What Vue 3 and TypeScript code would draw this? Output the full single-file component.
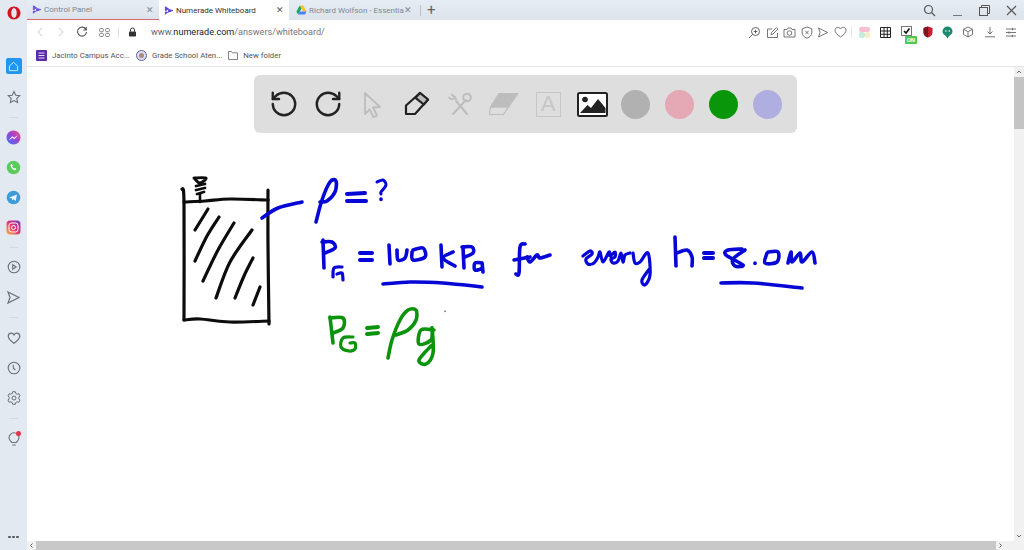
<script setup lang="ts">
type Stroke = { color: string; width?: number; pts: number[][] }

const BLUE = '#0606d6'
const GREEN = '#0b930b'
const INK = '#0c0c0c'

const strokes: Stroke[] = [
  // cylinder
  { color: INK, pts: [[182, 189], [184, 203], [184, 320]] },
  { color: INK, pts: [[184, 320], [200, 319], [230, 322], [269, 321]] },
  { color: INK, pts: [[268, 190], [268, 245], [269, 324]] },
  { color: INK, pts: [[184, 202], [205, 201], [230, 199], [268, 200]] },
  { color: INK, pts: [[195, 230], [208, 209]] },
  { color: INK, pts: [[195, 261], [207, 236], [219, 217]] },
  { color: INK, pts: [[203, 281], [218, 250], [234, 223]] },
  { color: INK, pts: [[216, 298], [230, 262], [252, 230]] },
  { color: INK, pts: [[235, 298], [244, 276], [253, 258]] },
  { color: INK, pts: [[253, 305], [260, 287]] },
  // valve
  { color: INK, width: 3, pts: [[194, 178], [206, 178], [200, 183], [195, 179]] },
  { color: INK, width: 2.8, pts: [[196, 186], [205, 184]] },
  { color: INK, width: 2.8, pts: [[196, 190], [205, 188]] },
  { color: INK, width: 2.8, pts: [[197, 194], [204, 192]] },
  { color: INK, width: 2.6, pts: [[200, 194], [200, 202]] },
  // first line
  { color: BLUE, pts: [[262, 218], [278, 208], [302, 202]] },
  { color: BLUE, pts: [[316, 222], [322, 200], [330, 182], [336, 181], [335, 192], [327, 201], [320, 202]] },
  { color: BLUE, width: 4, pts: [[347, 194], [365, 193]] },
  { color: BLUE, width: 4, pts: [[347, 201], [366, 201]] },
  { color: BLUE, width: 3, pts: [[377, 182], [383, 180], [386, 185], [381, 192], [381, 194]] },
  { color: BLUE, pts: [[381, 199], [381, 199.5]] },
  // second line
  { color: BLUE, pts: [[323, 240], [324, 268]] },
  { color: BLUE, pts: [[322, 242], [332, 242], [335, 248], [325, 253]] },
  { color: BLUE, width: 3.2, pts: [[342, 267], [334, 268], [333, 277]] },
  { color: BLUE, width: 3.2, pts: [[337, 274], [342, 273], [343, 280]] },
  { color: BLUE, width: 4, pts: [[360, 253], [372, 253]] },
  { color: BLUE, width: 4, pts: [[360, 260], [372, 260]] },
  { color: BLUE, pts: [[389, 245], [390, 264]] },
  { color: BLUE, pts: [[397, 250], [398, 260], [405, 258], [407, 250]] },
  { color: BLUE, pts: [[412, 252], [413, 260], [425, 257], [423, 248], [413, 250]] },
  { color: BLUE, pts: [[441, 245], [442, 267]] },
  { color: BLUE, pts: [[453, 252], [443, 258], [455, 266]] },
  { color: BLUE, pts: [[463, 247], [464, 268]] },
  { color: BLUE, pts: [[462, 247], [472, 247], [473, 253], [465, 257]] },
  { color: BLUE, pts: [[482, 263], [475, 263], [475, 270], [482, 268], [482, 263], [483, 272]] },
  { color: BLUE, pts: [[383, 284], [410, 282], [443, 283], [482, 287]] },
  { color: BLUE, pts: [[525, 244], [520, 247], [519, 273], [516, 274]] },
  { color: BLUE, pts: [[514, 260], [530, 257]] },
  { color: BLUE, pts: [[527, 257], [530, 262], [537, 255], [540, 258], [550, 255]] },
  { color: BLUE, width: 3.2, pts: [[583, 256], [590, 251], [592, 254], [586, 259], [588, 264], [594, 263], [598, 257], [600, 252], [603, 262], [609, 252], [610, 256], [615, 252], [615, 257], [611, 259], [613, 263], [618, 261], [621, 253], [623, 262], [625, 255], [630, 253]] },
  { color: BLUE, width: 3.2, pts: [[633, 253], [635, 263], [640, 262], [648, 253], [650, 275], [645, 285], [642, 280], [650, 268]] },
  { color: BLUE, pts: [[675, 237], [676, 266]] },
  { color: BLUE, pts: [[677, 253], [687, 250], [692, 257], [692, 266]] },
  { color: BLUE, width: 4, pts: [[704, 253], [713, 253]] },
  { color: BLUE, width: 4, pts: [[704, 258], [713, 258]] },
  { color: BLUE, pts: [[742, 249], [728, 250], [726, 255], [743, 265], [735, 266], [733, 259], [745, 250]] },
  { color: BLUE, pts: [[755, 263], [755, 263.5]] },
  { color: BLUE, pts: [[767, 253], [765, 263], [777, 262], [778, 252], [768, 252]] },
  { color: BLUE, pts: [[788, 263], [791, 252], [792, 262], [800, 253], [802, 262], [812, 252], [815, 263]] },
  { color: BLUE, pts: [[721, 283], [753, 283], [802, 288]] },
  // third line
  { color: GREEN, pts: [[330, 317], [333, 343]] },
  { color: GREEN, pts: [[330, 318], [343, 318], [343, 328], [333, 333]] },
  { color: GREEN, width: 3.2, pts: [[353, 337], [343, 338], [341, 347], [349, 351], [355, 349], [355, 343], [350, 343]] },
  { color: GREEN, width: 4, pts: [[367, 328], [378, 327]] },
  { color: GREEN, width: 4, pts: [[367, 334], [378, 333]] },
  { color: GREEN, pts: [[388, 358], [392, 340], [400, 320], [408, 310], [416, 310], [416, 320], [408, 330], [396, 335]] },
  { color: GREEN, pts: [[434, 330], [421, 330], [419, 344], [431, 340], [432, 328], [433, 353], [426, 364], [419, 360], [431, 346]] },
  { color: '#777', width: 1.6, pts: [[445, 311], [445, 311.5]] },
]

// catmull-rom through the sampled points, so the ink doesn't look like a polyline
const toPath = (pts: number[][]) => {
  let d = `M${pts[0][0]} ${pts[0][1]}`
  for (let i = 0; i < pts.length - 1; i++) {
    const p0 = pts[i - 1] ?? pts[i]
    const p1 = pts[i]
    const p2 = pts[i + 1]
    const p3 = pts[i + 2] ?? p2
    const c1x = p1[0] + (p2[0] - p0[0]) / 6
    const c1y = p1[1] + (p2[1] - p0[1]) / 6
    const c2x = p2[0] - (p3[0] - p1[0]) / 6
    const c2y = p2[1] - (p3[1] - p1[1]) / 6
    d += ` C${c1x.toFixed(1)} ${c1y.toFixed(1)} ${c2x.toFixed(1)} ${c2y.toFixed(1)} ${p2[0]} ${p2[1]}`
  }
  return d
}

const widthOf = (s: Stroke) => s.width ?? (s.color === INK ? 3.2 : 3.6)

const colors = ['#b1b1b1', '#e4a9b4', '#0a960a', '#b0aee0']
</script>

<template>
  <div class="browser">
    <aside class="sidebar">
      <div class="logo">
        <svg width="14" height="14" viewBox="0 0 14 14"><path fill-rule="evenodd" d="M7 .5C10.6.5 13.500 3.400 13.500 7S10.600 13.500 7 13.500.5 10.600.5 7 3.400.5 7 .5zM7 2C5.400 2 4.300 4.200 4.300 7S5.400 12 7 12s2.700-2.200 2.700-5S8.600 2 7 2z" fill="#d3131f" /></svg>
      </div>
      <div class="side-item first">
        <span class="home">
          <svg width="11" height="11" viewBox="0 0 12 12" fill="none" stroke="#d8efff" stroke-width="1"><path d="M1.5 5.500 6 1.500l4.500 4v5h-9z" /></svg>
        </span>
      </div>
      <div class="side-item">
        <svg width="14" height="14" viewBox="0 0 14 14" fill="none" stroke="#67707a" stroke-width="1.1"><path d="M7 1.500 8.800 5.200l4 .5-3 2.700.8 4L7 10.500l-3.600 1.900.8-4-3-2.700 4-.5z" /></svg>
      </div>
      <div class="side-sep"></div>
      <div class="side-item">
        <svg width="15" height="15" viewBox="0 0 15 15">
          <defs><linearGradient id="ms" x1="0" y1="1" x2="1" y2="0"><stop offset="0" stop-color="#2f7ff5" /><stop offset=".55" stop-color="#a33fd0" /><stop offset="1" stop-color="#f5586c" /></linearGradient></defs>
          <circle cx="7.500" cy="7.500" r="7" fill="url(#ms)" />
          <path d="M3.500 9.500l2.800-3 1.800 1.500 3-2.200-2.700 3.200-1.900-1.500z" fill="#fff" stroke="#fff" stroke-width=".5" />
        </svg>
      </div>
      <div class="side-item">
        <svg width="15" height="15" viewBox="0 0 15 15">
          <circle cx="7.500" cy="7.500" r="6.800" fill="#5ccb5d" />
          <path d="M5 4.300c-.8.8-.6 2.200.6 3.700s2.600 2.400 3.700 2.100c.7-.2 1-.8 1-1.300L8.900 8l-.8.6C7.300 8.200 6.500 7.300 6.200 6.500l.6-.8L6 4z" fill="#fff" />
        </svg>
      </div>
      <div class="side-item">
        <svg width="15" height="15" viewBox="0 0 15 15">
          <circle cx="7.500" cy="7.500" r="6.800" fill="#3b9bd6" />
          <path d="M3 7.500l8-3-1.300 6.500-2.300-1.700-1.200 1.200-.3-2z" fill="#e8f5fc" />
        </svg>
      </div>
      <div class="side-item">
        <svg width="15" height="15" viewBox="0 0 15 15">
          <defs><linearGradient id="ig" x1="0" y1="1" x2="1" y2="0"><stop offset="0" stop-color="#f9b63d" /><stop offset=".5" stop-color="#e4336f" /><stop offset="1" stop-color="#7a3bc8" /></linearGradient></defs>
          <rect x=".5" y=".5" width="14" height="14" rx="3.500" fill="url(#ig)" />
          <rect x="3" y="3" width="9" height="9" rx="2.500" fill="none" stroke="#fff" stroke-width="1" />
          <circle cx="7.500" cy="7.500" r="2" fill="none" stroke="#fff" stroke-width="1" />
        </svg>
      </div>
      <div class="side-sep"></div>
      <div class="side-item">
        <svg width="14" height="14" viewBox="0 0 14 14" fill="none" stroke="#67707a" stroke-width="1.1"><circle cx="7" cy="7" r="5.800" /><path d="M5.700 4.700 9.200 7l-3.500 2.300z" /></svg>
      </div>
      <div class="side-item">
        <svg width="15" height="15" viewBox="0 0 15 15" fill="none" stroke="#67707a" stroke-width="1.2"><path d="M2 2l11 5.500L2 13l2-5.500z" /></svg>
      </div>
      <div class="side-sep tall"></div>
      <div class="side-item">
        <svg width="14" height="14" viewBox="0 0 14 14" fill="none" stroke="#67707a" stroke-width="1.2"><path d="M7 12.300C3 9.500 1.300 7.500 1.300 5.200 1.300 3.400 2.700 2.200 4.200 2.200c1.200 0 2.200.6 2.800 1.700.6-1.100 1.600-1.700 2.800-1.700 1.500 0 2.900 1.200 2.900 3 0 2.300-1.700 4.300-5.700 7.100z" /></svg>
      </div>
      <div class="side-item">
        <svg width="14" height="14" viewBox="0 0 14 14" fill="none" stroke="#67707a" stroke-width="1.1"><circle cx="7" cy="7" r="5.800" /><path d="M6.300 3.800V7l2 2" /></svg>
      </div>
      <div class="side-item">
        <svg width="14" height="14" viewBox="0 0 14 14" fill="none" stroke="#67707a" stroke-width="1"><path d="M5.700 1.200h2.600l.4 1.700 1.400.8 1.700-.5 1.200 2.200-1.200 1.300v1.600l1.200 1.300-1.200 2.200-1.700-.5-1.400.8-.4 1.700H5.700l-.4-1.700-1.400-.8-1.700.5L1 9.600l1.200-1.300V6.700L1 5.400l1.200-2.200 1.700.5 1.400-.8z" transform="translate(0 -.5)" /><circle cx="7" cy="7" r="2" /></svg>
      </div>
      <div class="side-sep tall"></div>
      <div class="side-item bulb">
        <svg width="14" height="16" viewBox="0 0 14 16" fill="none" stroke="#67707a" stroke-width="1.1"><path d="M4.800 11.500C3.400 10.300 2 9 2 6.800a5 5 0 0 1 10 0c0 2.200-1.400 3.500-2.800 4.700zM5.300 14h3.400" /></svg>
        <span class="bulb-dot"></span>
      </div>
      <div class="side-dots"><i></i><i></i><i></i></div>
    </aside>

    <div class="main">
      <div class="tabs">
        <div class="tab tab-first">
          <svg class="fav" width="10" height="11" viewBox="0 0 11 11"><path d="M1.500 1.500 5 3.700 1.500 5.800zM5 4.500 9.700 5.500 5 7.300zM1.500 7.200H4L1.500 9.700z" fill="#6a52e0" stroke="#6a52e0" stroke-width="1" stroke-linejoin="round" /></svg>
          <span class="tab-title">Control Panel</span>
          <span class="tab-x">✕</span>
        </div>
        <div class="tab tab-active">
          <svg class="fav" width="10" height="11" viewBox="0 0 11 11"><path d="M1.500 1.500 5 3.700 1.500 5.800zM5 4.500 9.700 5.500 5 7.300zM1.500 7.200H4L1.500 9.700z" fill="#5a41e2" stroke="#5a41e2" stroke-width="1" stroke-linejoin="round" /></svg>
          <span class="tab-title">Numerade Whiteboard</span>
          <span class="tab-x">✕</span>
        </div>
        <div class="tab tab-last">
          <svg class="fav" width="11" height="10" viewBox="0 0 11 10"><path d="M3.800.5h3.400l3.400 6H7.200z" fill="#f7c32c" /><path d="M3.800.5.400 6.500l1.700 3 3.400-6z" fill="#1ea362" /><path d="M2.100 9.500h6.800l1.700-3H3.800z" fill="#4285f4" /></svg>
          <span class="tab-title">Richard Wolfson - Essentia</span>
          <span class="tab-x">✕</span>
        </div>
        <span class="tab-sep"></span>
        <span class="tab-plus">+</span>
        <div class="win-controls">
          <svg width="13" height="13" viewBox="0 0 13 13" fill="none" stroke="#555" stroke-width="1.2"><circle cx="5.500" cy="5.500" r="4" /><path d="M8.500 8.500l3.500 3.500" /></svg>
          <svg width="11" height="11" viewBox="0 0 11 11" stroke="#777" stroke-width="1"><path d="M1 10.500h9" /></svg>
          <svg width="11" height="11" viewBox="0 0 11 11" fill="none" stroke="#555" stroke-width="1"><rect x=".5" y="2.500" width="8" height="8" /><path d="M2.500 2.500v-2h8v8h-2" /></svg>
          <svg width="11" height="11" viewBox="0 0 11 11" fill="none" stroke="#555" stroke-width="1.1"><path d="M1 1l9 9M10 1l-9 9" /></svg>
        </div>
      </div>

      <div class="toolbar">
        <div class="nav">
          <svg width="9" height="10" viewBox="0 0 9 10" fill="none" stroke="#dadde1" stroke-width="1.2"><path d="M6 1 2 5l4 4" /></svg>
          <svg width="9" height="10" viewBox="0 0 9 10" fill="none" stroke="#dadde1" stroke-width="1.2"><path d="M3 1l4 4-4 4" /></svg>
          <svg width="12" height="12" viewBox="0 0 12 12" fill="none" stroke="#555" stroke-width="1.1"><path d="M10 3.500A4.500 4.500 0 1 0 10.500 6M10.300 1v3H7.300" /></svg>
          <svg width="11" height="9" viewBox="0 0 11 9" fill="none" stroke="#777" stroke-width=".9"><rect x=".5" y=".5" width="4" height="3.200" rx="1.300" /><rect x="6.500" y=".5" width="4" height="3.200" rx="1.300" /><rect x=".5" y="5.300" width="4" height="3.200" rx="1.300" /><rect x="6.500" y="5.300" width="4" height="3.200" rx="1.300" /></svg>
          <span class="nav-sep"></span>
          <svg width="9" height="10" viewBox="0 0 9 10"><path d="M2.500 4.500V3a2 2 0 0 1 4 0v1.500" fill="none" stroke="#333" stroke-width="1" /><rect x="1" y="4.500" width="7" height="5" rx=".7" fill="#333" /></svg>
        </div>
        <div class="url">www.<b>numerade.com</b><span>/answers/whiteboard/</span></div>
        <div class="actions">
          <svg width="13" height="13" viewBox="0 0 13 13" fill="none" stroke="#555" stroke-width=".9"><circle cx="7.500" cy="5.500" r="4" /><path d="M4.500 8.500 1 12M7.500 3.700v3.600M5.700 5.500h3.600" /></svg>
          <svg width="13" height="13" viewBox="0 0 13 13" fill="none" stroke="#666" stroke-width=".9"><path d="M11.500 7v4.500h-10V3H6M5 8.500l.5-2 5-5 1.500 1.500-5 5z" /></svg>
          <svg width="13" height="13" viewBox="0 0 13 13" fill="none" stroke="#666" stroke-width=".9"><path d="M1 3.500h3l1-1.500h3l1 1.500h3v7.500H1z" /><circle cx="6.500" cy="7" r="2.300" /></svg>
          <svg width="12" height="13" viewBox="0 0 12 13" fill="none" stroke="#666" stroke-width=".9"><path d="M6 1l4.800 1.800v4.200c0 2.500-2.200 4.200-4.800 5.200-2.600-1-4.800-2.700-4.800-5.200V2.800zM4.300 4.800l3.400 3.400M7.700 4.800 4.300 8.200" /></svg>
          <svg width="12" height="13" viewBox="0 0 12 13" fill="none" stroke="#666" stroke-width=".9"><path d="M1.500 2l9 4.500-9 4.500 1.600-4.500z" /></svg>
          <svg width="13" height="12" viewBox="0 0 13 12" fill="none" stroke="#666" stroke-width=".9"><path d="M6.500 11C2.800 8.400 1 6.500 1 4.300 1 2.500 2.300 1.300 3.800 1.300c1.100 0 2.100.6 2.700 1.700.6-1.100 1.600-1.700 2.700-1.700C10.700 1.300 12 2.500 12 4.300c0 2.200-1.800 4.100-5.500 6.700z" /></svg>
          <span class="act-sep"></span>
          <svg class="wide" width="13" height="13" viewBox="0 0 13 13"><rect x="1" y="1" width="11" height="5" rx="2" fill="#f6bfd0" /><rect x="1" y="6" width="6" height="6" rx="2" fill="#c8ecdc" /><rect x="7" y="6" width="5" height="6" rx="2" fill="#f8ecc4" /></svg>
          <svg class="wide" width="11" height="11" viewBox="0 0 11 11" fill="none" stroke="#222" stroke-width="1"><path d="M.5.500h10v10H.5zM.5 4h10M.5 7.300h10M4 .5v10M7.300.5v10" /></svg>
          <span class="ext-on">
            <svg width="11" height="10" viewBox="0 0 11 10"><rect x=".5" y=".5" width="10" height="9" fill="#fff" stroke="#777" /><path d="M3 5l2 2 3.500-4.500" fill="none" stroke="#111" stroke-width="1.600" /></svg>
            <em>ON</em>
          </span>
          <svg class="wide" width="10" height="12" viewBox="0 0 10 12"><path d="M5 .5l4.500 1.500v4.500C9.500 9 7.500 10.800 5 11.500 2.500 10.800.5 9 .5 6.500V2z" fill="#c5202f" /><path d="M5 .5V11.500C2.500 10.800.5 9 .5 6.500V2z" fill="#7b1520" /></svg>
          <svg class="wide" width="11" height="13" viewBox="0 0 11 13"><path d="M5.500.5a5 5 0 0 1 5 5c0 2-1.500 3.400-3.400 4.400L5.500 12.500 3.900 9.900C2 8.900.5 7.500.5 5.500a5 5 0 0 1 5-5z" fill="#1d8a6f" /><circle cx="3.800" cy="5" r=".8" fill="#fff" /><circle cx="7.200" cy="5" r=".8" fill="#fff" /></svg>
          <svg class="wide" width="12" height="12" viewBox="0 0 12 12" fill="none" stroke="#666" stroke-width=".9"><path d="M6 1l4.500 2.300v5.200L6 11 1.500 8.500V3.300zM1.500 3.300 6 5.700l4.500-2.400M6 5.700V11" /></svg>
          <svg class="wide" width="12" height="12" viewBox="0 0 12 12" fill="none" stroke="#666" stroke-width=".9"><path d="M6 1v7M3.500 5.500 6 8l2.500-2.500M1 10.800h10" /></svg>
          <svg class="wide" width="12" height="11" viewBox="0 0 12 11" fill="none" stroke="#666" stroke-width=".9"><path d="M1 2h10M1 5.500h10M1 9h10M7.500.8v2.400M4 4.300v2.400M7.500 7.800v2.400" /></svg>
        </div>
      </div>

      <div class="bookmarks">
        <div class="bm">
          <svg width="11" height="11" viewBox="0 0 11 11"><rect width="11" height="11" rx="1" fill="#5b2aa8" /><path d="M2.500 3h6M2.500 5.500h6M2.500 8h6" stroke="#e6dcf7" stroke-width="1" /></svg>
          <span>Jacinto Campus Acc...</span>
        </div>
        <div class="bm">
          <svg width="11" height="11" viewBox="0 0 11 11"><circle cx="5.500" cy="5.500" r="5" fill="#dfe0ee" stroke="#5a5fa8" /><circle cx="5.500" cy="5.500" r="2.500" fill="#a98a7c" /></svg>
          <span>Grade School Aten...</span>
        </div>
        <div class="bm">
          <svg width="10" height="9" viewBox="0 0 10 9" fill="none" stroke="#666" stroke-width=".8"><path d="M.5 8.500v-8h3l1 1.300h5v6.700z" /></svg>
          <span>New folder</span>
        </div>
      </div>

      <div class="page">
        <svg class="board" width="987" height="483" viewBox="27 67 987 483" fill="none" stroke-linecap="round" stroke-linejoin="round">
          <path
            v-for="(s, i) in strokes"
            :key="i"
            :d="toPath(s.pts)"
            :stroke="s.color"
            :stroke-width="widthOf(s)"
          />
        </svg>

        <div class="tools">
          <div class="tool">
            <svg width="30" height="30" viewBox="0 0 24 24" fill="none" stroke="#222" stroke-width="1.9" stroke-linecap="round" stroke-linejoin="round"><path d="M3 12a9 9 0 1 0 9-9 9.750 9.750 0 0 0-6.740 2.740L3 8" /><path d="M3 3v5h5" /></svg>
          </div>
          <div class="tool">
            <svg width="30" height="30" viewBox="0 0 24 24" fill="none" stroke="#222" stroke-width="1.9" stroke-linecap="round" stroke-linejoin="round"><path d="M21 12a9 9 0 1 1-9-9c2.520 0 4.930 1 6.740 2.740L21 8" /><path d="M21 3v5h-5" /></svg>
          </div>
          <div class="tool">
            <svg width="30" height="30" viewBox="0 0 30 30" fill="none" stroke="#bdbdbd" stroke-width="1.8" stroke-linejoin="round"><path d="M8 3l15 14-7 .5 4 8-3.500 1.800-3.800-8L8 24z" transform="translate(0 1)" /></svg>
          </div>
          <div class="tool">
            <svg width="30" height="30" viewBox="0 0 30 30" fill="none" stroke="#222" stroke-width="2.2" stroke-linejoin="round"><path d="M19 4l8 6.500L14 25H5v-8.500z" /><path d="M19 4l8 6.500-4.200 5-8.300-6.700z" fill="#bdbdbd" /></svg>
          </div>
          <div class="tool">
            <svg width="26" height="26" viewBox="0 0 26 26" fill="none" stroke="#bdbdbd" stroke-width="2" stroke-linecap="round"><path d="M6 23 19 9M20 23 9 10" /><circle cx="20" cy="6.500" r="3.800" /><path d="M2 6.500c2 2.500 5 2.500 6-.5M5 3.500l4 4.500" /></svg>
          </div>
          <div class="tool">
            <svg width="32" height="24" viewBox="0 0 32 24" stroke="#bdbdbd" stroke-width="1.2" stroke-linejoin="round"><path d="M11 1.500h19L20.500 15H2.500z" fill="#bdbdbd" /><path d="M2.500 15h18l-5 7.500H1.500z" fill="none" /></svg>
          </div>
          <div class="tool">
            <span class="letter">A</span>
          </div>
          <div class="tool">
            <svg width="31" height="25" viewBox="0 0 31 25"><rect x="1" y="1" width="29" height="23" rx="1.500" fill="#fff" stroke="#222" stroke-width="2" /><circle cx="8" cy="7.500" r="2.800" fill="#222" /><path d="M3 21l7.500-8 3.500 3 7-9 7.500 9v5z" fill="#222" /></svg>
          </div>
          <div v-for="c in colors" :key="c" class="tool">
            <span class="swatch" :style="{ background: c }"></span>
          </div>
        </div>

        <div class="vbar">
          <svg class="arrow" width="10" height="10" viewBox="0 0 10 10" fill="none" stroke="#666"><path d="M3 6l2-2 2 2" /></svg>
          <div class="vthumb"></div>
          <svg class="arrow down" width="10" height="10" viewBox="0 0 10 10" fill="none" stroke="#666"><path d="M3 4l2 2 2-2" /></svg>
        </div>
        <div class="hbar">
          <svg class="arrow" width="9" height="9" viewBox="0 0 9 9" fill="none" stroke="#666"><path d="M5.500 2.500l-2 2 2 2" /></svg>
          <div class="hthumb"></div>
          <svg class="arrow" width="9" height="9" viewBox="0 0 9 9" fill="none" stroke="#666"><path d="M3.500 2.500l2 2-2 2" /></svg>
        </div>
      </div>
    </div>
  </div>
</template>

<style>
html,
body {
  margin: 0;
  overflow: hidden;
  background: #fff;
}
</style>

<style scoped>
.browser {
  display: flex;
  width: 1024px;
  height: 550px;
  overflow: hidden;
  font-family: Roboto, 'Noto Sans', sans-serif;
  color: #333;
}

.sidebar {
  display: flex;
  flex-direction: column;
  align-items: center;
  flex: none;
  width: 27px;
  background: #e2e9f1;
}

.logo {
  display: flex;
  justify-content: center;
  height: 51px;
  padding-top: 6px;
  box-sizing: border-box;
}

.side-item {
  position: relative;
  display: flex;
  align-items: center;
  justify-content: center;
  flex: none;
  width: 100%;
  height: 30px;
}

.side-item.first {
  margin-bottom: 1px;
}

.home {
  display: flex;
  align-items: center;
  justify-content: center;
  width: 16px;
  height: 16px;
  background: #2196ee;
  border-radius: 2px;
}

.side-sep {
  flex: none;
  width: 9px;
  height: 1px;
  margin: 5px 0 4px;
  background: #d3dae2;
}

.side-sep.tall {
  margin-bottom: 5px;
}

.bulb-dot {
  position: absolute;
  top: 7px;
  right: 6px;
  width: 5px;
  height: 5px;
  border-radius: 50%;
  background: #e8324a;
}

.side-dots {
  display: flex;
  gap: 1.5px;
  margin-top: auto;
  margin-bottom: 12px;
}

.side-dots i {
  width: 2.5px;
  height: 2.5px;
  border-radius: 50%;
  background: #555;
}

.main {
  display: flex;
  flex-direction: column;
  flex: 1;
  min-width: 0;
}

.tabs {
  display: flex;
  align-items: stretch;
  flex: none;
  height: 20px;
  background: linear-gradient(#e6edf5, #dde3ea);
}

.tab {
  display: flex;
  align-items: center;
  box-sizing: border-box;
  padding: 0 5px;
  font-size: 8px;
  color: #7d8894;
}

.tab-first {
  width: 132px;
  border-bottom: 1.5px solid #d9636f;
}

.tab-active {
  width: 130px;
  background: #fff;
  color: #333;
}

.tab-last {
  width: 128px;
  padding-left: 7px;
}

.fav {
  flex: none;
  margin-right: 2px;
}

.tab-title {
  flex: 1;
  min-width: 0;
  white-space: nowrap;
}

.tab-x {
  flex: none;
  margin-left: 3px;
  font-size: 9px;
  color: #7d8894;
}

.tab-active .tab-x {
  color: #555;
}

.tab-sep {
  align-self: center;
  width: 1px;
  height: 11px;
  margin-left: 3px;
  background: #b9c2cc;
}

.tab-plus {
  align-self: center;
  margin-left: 6px;
  font-size: 15px;
  line-height: 1;
  color: #666;
}

.win-controls {
  display: flex;
  align-items: center;
  gap: 16px;
  margin-left: auto;
  padding-right: 7px;
}

.toolbar {
  display: flex;
  align-items: center;
  flex: none;
  height: 24px;
  background: #fff;
}

.nav {
  display: flex;
  align-items: center;
  gap: 11px;
  padding-left: 9px;
}

.nav-sep {
  width: 1px;
  height: 11px;
  margin: 0 -2px 0 -3px;
  background: #e2e2e2;
}

.url {
  margin-left: 14px;
  font-size: 9.1px;
  color: #666;
  white-space: nowrap;
}

.url b {
  font-weight: 400;
  color: #222;
}

.url span {
  color: #777;
}

.actions {
  display: flex;
  align-items: center;
  gap: 4.5px;
  margin-left: auto;
  padding-right: 7px;
}

.act-sep {
  flex: none;
  width: 1px;
  height: 12px;
  margin-right: -3.5px;
  background: #e6e6e6;
}

.wide {
  margin-left: 4.8px;
}

.ext-on {
  position: relative;
  display: flex;
  width: 13px;
  height: 13px;
  margin-left: 4.8px;
}

.ext-on em {
  position: absolute;
  right: -3px;
  bottom: -5px;
  padding: 0 1.5px;
  background: #4cc95c;
  border-radius: 1px;
  font-size: 6px;
  font-style: normal;
  font-weight: 700;
  line-height: 8px;
  color: #fff;
}

.bookmarks {
  display: flex;
  align-items: center;
  gap: 6px;
  flex: none;
  height: 22px;
  padding-left: 9px;
  background: #fff;
  border-bottom: 1px solid #e6e6e6;
}

.bm {
  display: flex;
  align-items: center;
  gap: 5px;
  font-size: 7.8px;
  color: #555;
  white-space: nowrap;
}

.page {
  position: relative;
  flex: 1;
  min-height: 0;
  background: #fff;
}

.board {
  position: absolute;
  top: 0;
  left: 0;
}

.tools {
  position: absolute;
  top: 8px;
  left: 227px;
  display: flex;
  align-items: center;
  box-sizing: border-box;
  width: 543px;
  height: 58px;
  padding-left: 8px;
  background: #dedede;
  border-radius: 6px;
}

.tool {
  display: flex;
  align-items: center;
  justify-content: center;
  flex: none;
  width: 44px;
  height: 44px;
}

.letter {
  display: flex;
  align-items: center;
  justify-content: center;
  width: 25px;
  height: 25px;
  box-sizing: border-box;
  border: 1.5px solid #c6c6c6;
  font-family: 'Liberation Sans', sans-serif;
  font-size: 22px;
  line-height: 1;
  color: #c6c6c6;
}

.swatch {
  width: 29px;
  height: 29px;
  margin-left: -2px;
  border-radius: 50%;
}

.vbar {
  position: absolute;
  top: 0;
  right: 0;
  bottom: 9px;
  display: flex;
  flex-direction: column;
  align-items: center;
  width: 10px;
  background: #f1f1f1;
}

.arrow {
  flex: none;
}

.arrow.down {
  margin-top: auto;
}

.vthumb {
  flex: none;
  width: 100%;
  height: 52px;
  background: #c4c4c4;
}

.hbar {
  position: absolute;
  left: 0;
  right: 0;
  bottom: 0;
  display: flex;
  align-items: center;
  height: 9px;
  background: #f1f1f1;
}

.hthumb {
  flex: none;
  width: 960px;
  height: 100%;
  background: #c8c8c8;
}
</style>
